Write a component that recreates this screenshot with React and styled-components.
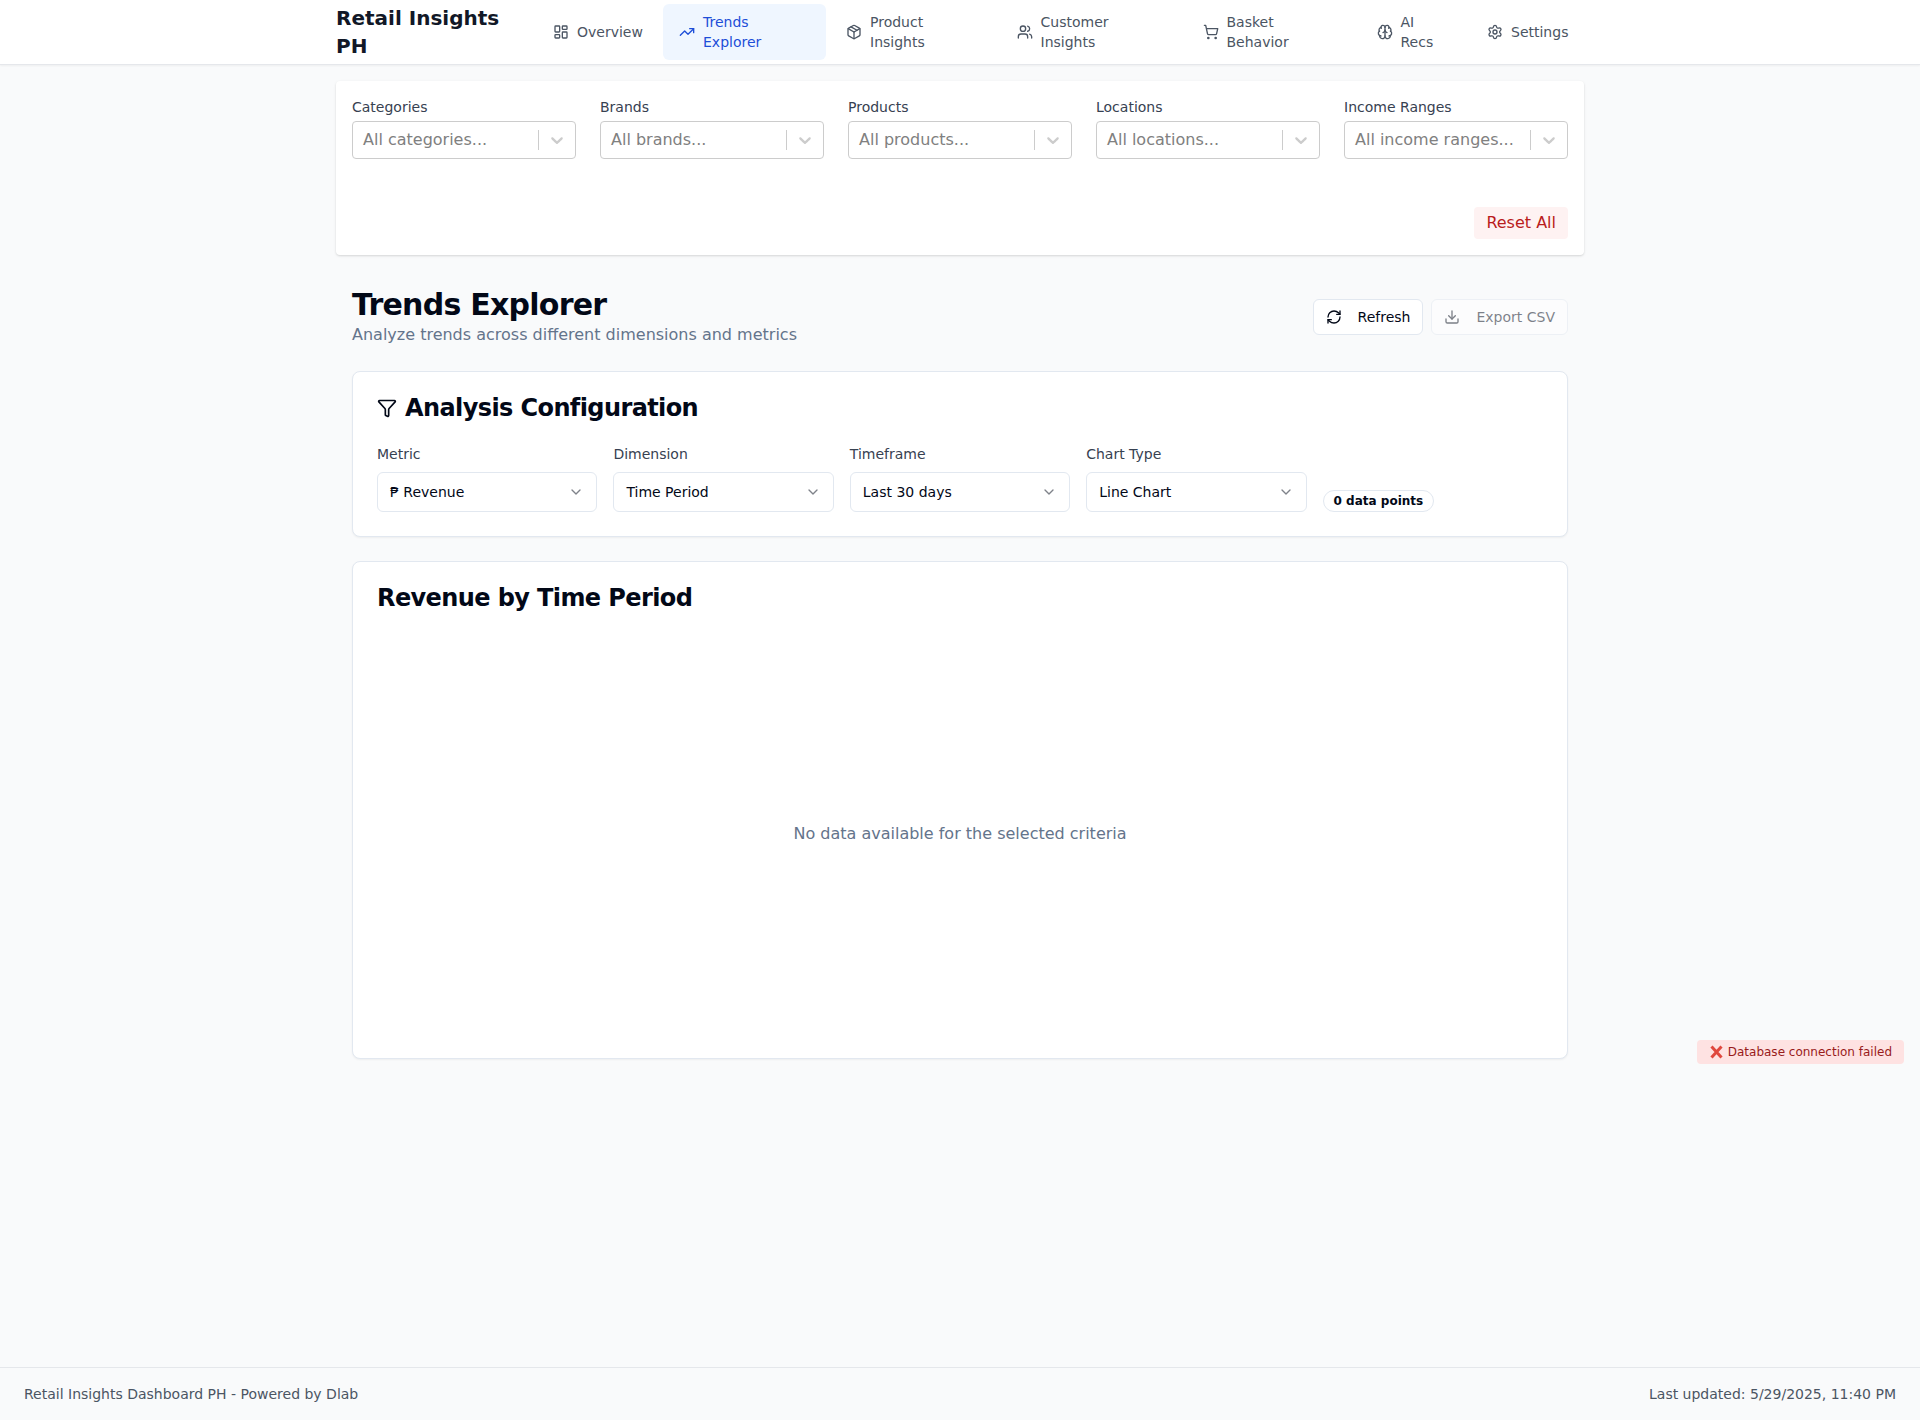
import styled, { createGlobalStyle } from 'styled-components';
import {
  LayoutDashboard,
  TrendingUp,
  Package,
  Users,
  ShoppingCart,
  Brain,
  Settings,
  Filter,
  RefreshCw,
  Download,
  ChevronDown,
} from 'lucide-react';

const GlobalStyle = createGlobalStyle`
  * {
    box-sizing: border-box;
  }
  html, body {
    margin: 0;
    padding: 0;
  }
  body {
    background: #f9fafb;
    color: #020817;
    font-family: "DejaVu Sans", sans-serif;
    font-size: 16px;
    line-height: 24px;
  }
`;

const Page = styled.div`
  min-height: 100vh;
  display: flex;
  flex-direction: column;
`;

const Header = styled.header`
  background: #fff;
  border-bottom: 1px solid #e5e7eb;
  box-shadow: 0 1px 2px rgba(0, 0, 0, 0.05);
`;

const HeaderInner = styled.div`
  width: 1280px;
  margin: 0 auto;
  padding: 0 16px;
  height: 64px;
  display: flex;
  align-items: center;
  justify-content: space-between;
`;

const Brand = styled.div`
  width: 180px;
  font-size: 20px;
  line-height: 28px;
  font-weight: 700;
  color: #111827;
`;

const Nav = styled.nav`
  display: flex;
  align-items: center;
  gap: 4px;
`;

const NavItem = styled.a`
  display: flex;
  align-items: center;
  gap: 8px;
  width: ${(p) => p.$width}px;
  padding: 8px 16px;
  border-radius: 6px;
  font-size: 14px;
  line-height: 20px;
  color: ${(p) => (p.$active ? '#1d4ed8' : '#4b5563')};
  background: ${(p) => (p.$active ? '#eff6ff' : 'transparent')};
  svg {
    flex-shrink: 0;
  }
`;

const NavLabel = styled.span`
  width: min-content;
`;

const Main = styled.main`
  width: 1280px;
  margin: 0 auto;
  padding: 16px;
  flex: 1;
`;

const FilterCard = styled.section`
  background: #fff;
  border-radius: 4px;
  box-shadow: 0 1px 3px rgba(0, 0, 0, 0.1), 0 1px 2px rgba(0, 0, 0, 0.06);
  padding: 16px;
`;

const FilterGrid = styled.div`
  display: grid;
  grid-template-columns: repeat(5, 1fr);
  gap: 24px;
`;

const FieldLabel = styled.label`
  display: block;
  font-size: 14px;
  line-height: 20px;
  color: #374151;
  margin-bottom: ${(p) => p.$gap}px;
`;

const Combo = styled.div`
  height: 38px;
  display: flex;
  align-items: center;
  background: #fff;
  border: 1px solid #ccc;
  border-radius: 4px;
`;

const ComboValue = styled.div`
  flex: 1;
  min-width: 0;
  padding: 0 10px;
  color: #808080;
  font-size: 16px;
  white-space: nowrap;
  overflow: hidden;
`;

const ComboSeparator = styled.span`
  width: 1px;
  height: 20px;
  background: #ccc;
`;

const ComboArrow = styled.svg`
  width: 20px;
  height: 20px;
  margin: 0 8px;
  fill: #ccc;
`;

const FilterActions = styled.div`
  display: flex;
  justify-content: flex-end;
  margin-top: 48px;
`;

const ResetButton = styled.button`
  padding: 4px 12px;
  border: none;
  border-radius: 4px;
  background: #fef2f2;
  color: #b91c1c;
  font-family: inherit;
  font-size: 16px;
  line-height: 24px;
`;

const Content = styled.div`
  padding: 32px 16px 0;
`;

const TitleRow = styled.div`
  display: flex;
  align-items: center;
  justify-content: space-between;
  margin-bottom: 24px;
`;

const PageTitle = styled.h1`
  margin: 0;
  font-size: 30px;
  line-height: 36px;
  font-weight: 700;
  letter-spacing: -0.025em;
`;

const PageSubtitle = styled.p`
  margin: 0;
  font-size: 16px;
  line-height: 24px;
  color: #64748b;
`;

const Actions = styled.div`
  display: flex;
  gap: 8px;
`;

const ActionButton = styled.button`
  height: 36px;
  display: flex;
  align-items: center;
  gap: 16px;
  padding: 0 12px;
  background: #fff;
  border: 1px solid #e2e8f0;
  border-radius: 6px;
  color: #020817;
  font-family: inherit;
  font-size: 14px;
  opacity: ${(p) => (p.disabled ? 0.5 : 1)};
`;

const Card = styled.section`
  background: #fff;
  border: 1px solid #e2e8f0;
  border-radius: 8px;
  box-shadow: 0 1px 2px rgba(0, 0, 0, 0.05);
  margin-bottom: 24px;
`;

const CardHeader = styled.div`
  padding: 24px;
`;

const CardTitle = styled.h3`
  margin: 0;
  display: flex;
  align-items: center;
  gap: 8px;
  font-size: 24px;
  line-height: 24px;
  font-weight: 700;
  letter-spacing: -0.025em;
`;

const CardBody = styled.div`
  padding: 0 24px 24px;
`;

const ConfigGrid = styled.div`
  display: grid;
  grid-template-columns: repeat(5, 1fr);
  gap: 16px;
`;

const SelectBox = styled.div`
  height: 40px;
  display: flex;
  align-items: center;
  justify-content: space-between;
  padding: 0 12px;
  background: #fff;
  border: 1px solid #e2e8f0;
  border-radius: 6px;
  font-size: 14px;
  svg {
    opacity: 0.5;
  }
`;

const Badge = styled.span`
  align-self: end;
  justify-self: start;
  padding: 2px 10px;
  border: 1px solid #e2e8f0;
  border-radius: 999px;
  font-size: 12px;
  line-height: 16px;
  font-weight: 700;
`;

const EmptyChart = styled.div`
  height: 400px;
  display: flex;
  align-items: center;
  justify-content: center;
  color: #64748b;
  font-size: 16px;
`;

const Toast = styled.div`
  position: fixed;
  top: 1040px;
  right: 16px;
  display: flex;
  align-items: center;
  gap: 4px;
  padding: 4px 12px;
  background: #fee2e2;
  border-radius: 4px;
  color: #991b1b;
  font-size: 12px;
  line-height: 16px;
`;

const Footer = styled.footer`
  display: flex;
  justify-content: space-between;
  padding: 16px 24px;
  border-top: 1px solid #e5e7eb;
  color: #4b5563;
  font-size: 14px;
  line-height: 20px;
`;

const navItems = [
  { label: 'Overview', icon: LayoutDashboard, width: 122 },
  { label: 'Trends Explorer', icon: TrendingUp, width: 163, active: true },
  { label: 'Product Insights', icon: Package, width: 166.5 },
  { label: 'Customer Insights', icon: Users, width: 182 },
  { label: 'Basket Behavior', icon: ShoppingCart, width: 170 },
  { label: 'AI Recs', icon: Brain, width: 106.5 },
  { label: 'Settings', icon: Settings, width: 113 },
];

const filters = [
  { label: 'Categories', placeholder: 'All categories...' },
  { label: 'Brands', placeholder: 'All brands...' },
  { label: 'Products', placeholder: 'All products...' },
  { label: 'Locations', placeholder: 'All locations...' },
  { label: 'Income Ranges', placeholder: 'All income ranges...' },
];

const config = [
  { label: 'Metric', value: '₱ Revenue' },
  { label: 'Dimension', value: 'Time Period' },
  { label: 'Timeframe', value: 'Last 30 days' },
  { label: 'Chart Type', value: 'Line Chart' },
];

export default function App() {
  return (
    <Page>
      <GlobalStyle />
      <Header>
        <HeaderInner>
          <Brand>Retail Insights PH</Brand>
          <Nav>
            {navItems.map((item) => (
              <NavItem key={item.label} $width={item.width} $active={item.active}>
                <item.icon size={16} />
                <NavLabel>{item.label}</NavLabel>
              </NavItem>
            ))}
          </Nav>
        </HeaderInner>
      </Header>

      <Main>
        <FilterCard>
          <FilterGrid>
            {filters.map((f) => (
              <div key={f.label}>
                <FieldLabel $gap={4}>{f.label}</FieldLabel>
                <Combo>
                  <ComboValue>{f.placeholder}</ComboValue>
                  <ComboSeparator />
                  <ComboArrow viewBox="0 0 20 20">
                    <path d="M4.516 7.548c0.436-0.446 1.043-0.481 1.576 0l3.908 3.747 3.908-3.747c0.533-0.481 1.141-0.446 1.574 0 0.436 0.445 0.408 1.197 0 1.615-0.406 0.418-4.695 4.502-4.695 4.502-0.217 0.223-0.502 0.335-0.787 0.335s-0.57-0.112-0.789-0.335c0 0-4.287-4.084-4.695-4.502s-0.436-1.17 0-1.615z" />
                  </ComboArrow>
                </Combo>
              </div>
            ))}
          </FilterGrid>
          <FilterActions>
            <ResetButton>Reset All</ResetButton>
          </FilterActions>
        </FilterCard>

        <Content>
          <TitleRow>
            <div>
              <PageTitle>Trends Explorer</PageTitle>
              <PageSubtitle>Analyze trends across different dimensions and metrics</PageSubtitle>
            </div>
            <Actions>
              <ActionButton>
                <RefreshCw size={16} />
                Refresh
              </ActionButton>
              <ActionButton disabled>
                <Download size={16} />
                Export CSV
              </ActionButton>
            </Actions>
          </TitleRow>

          <Card>
            <CardHeader>
              <CardTitle>
                <Filter size={20} />
                Analysis Configuration
              </CardTitle>
            </CardHeader>
            <CardBody>
              <ConfigGrid>
                {config.map((c) => (
                  <div key={c.label}>
                    <FieldLabel $gap={8}>{c.label}</FieldLabel>
                    <SelectBox>
                      {c.value}
                      <ChevronDown size={16} />
                    </SelectBox>
                  </div>
                ))}
                <Badge>0 data points</Badge>
              </ConfigGrid>
            </CardBody>
          </Card>

          <Card>
            <CardHeader>
              <CardTitle>Revenue by Time Period</CardTitle>
            </CardHeader>
            <CardBody>
              <EmptyChart>No data available for the selected criteria</EmptyChart>
            </CardBody>
          </Card>
        </Content>
      </Main>

      <Toast>
        <svg width="15" height="16" viewBox="0 0 15 16">
          <path d="M2.5 2.5 12.5 13.5M12.5 2.5 2.5 13.5" stroke="#e0483e" strokeWidth="3" />
        </svg>
        Database connection failed
      </Toast>

      <Footer>
        <span>Retail Insights Dashboard PH - Powered by Dlab</span>
        <span>Last updated: 5/29/2025, 11:40 PM</span>
      </Footer>
    </Page>
  );
}
